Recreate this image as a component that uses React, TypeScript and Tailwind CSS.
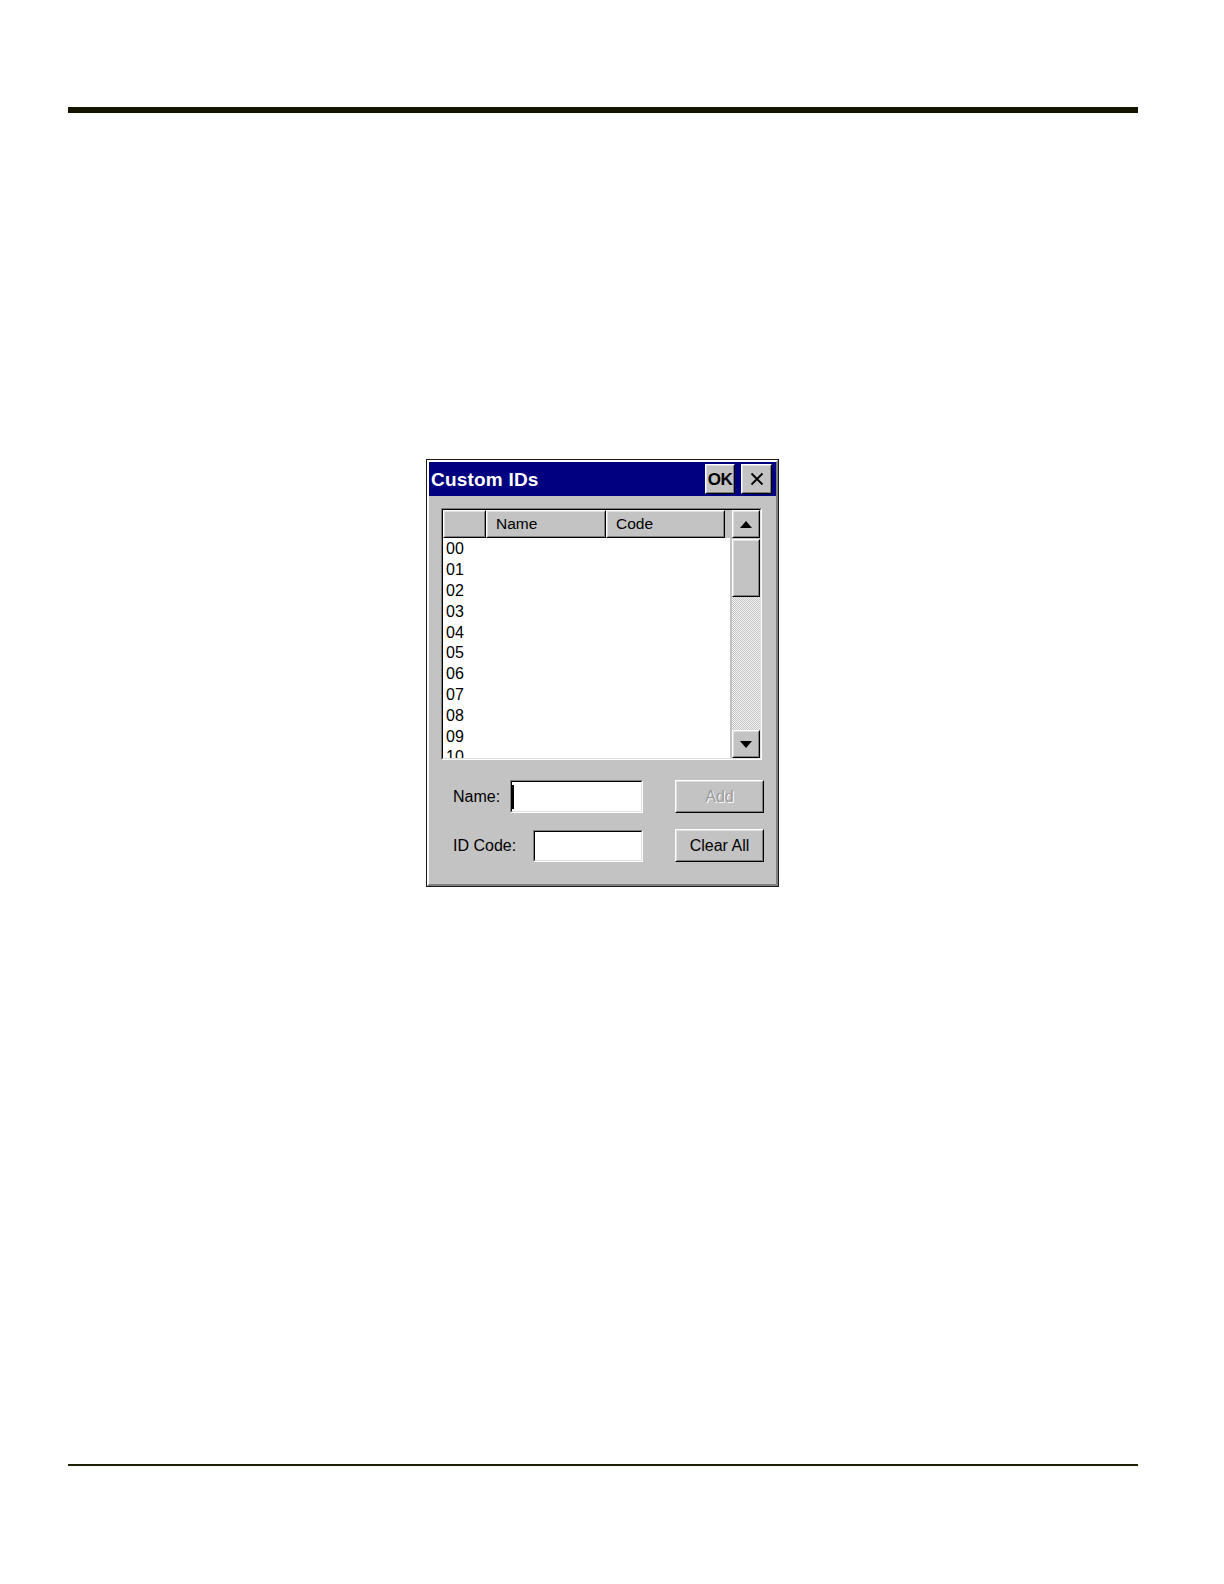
import React from "react";

const font = { fontFamily: '"Liberation Sans", Arial, sans-serif' };

function Raised({ className = "", children }: { className?: string; children?: React.ReactNode }) {
  return (
    <div className={`border border-t-white border-l-white border-b-black border-r-black ${className}`}>
      <div className="w-full h-full border border-t-[#dfdfdf] border-l-[#dfdfdf] border-b-[#808080] border-r-[#808080] bg-[#c3c3c3] flex items-center justify-center">
        {children}
      </div>
    </div>
  );
}

function Sunken({ className = "", children, inner = "" }: { className?: string; children?: React.ReactNode; inner?: string }) {
  return (
    <div className={`border border-t-[#808080] border-l-[#808080] border-b-white border-r-white ${className}`}>
      <div className={`w-full h-full border border-t-black border-l-black border-b-[#dfdfdf] border-r-[#dfdfdf] bg-white ${inner}`}>
        {children}
      </div>
    </div>
  );
}

function Arrow({ up }: { up?: boolean }) {
  return (
    <svg width="12" height="7" viewBox="0 0 12 7">
      {up ? <polygon points="0,7 12,7 6,0" fill="#000" /> : <polygon points="0,0 12,0 6,7" fill="#000" />}
    </svg>
  );
}

export default function App() {
  const rows = ["00", "01", "02", "03", "04", "05", "06", "07", "08", "09", "10"];
  return (
    <div className="w-full bg-white pb-[60px]" style={font}>
      <div className="pt-[107px] pl-[68px]">
        <div className="w-[1070px] h-[6px] bg-[#141400]" />
        {/* Dialog */}
        <div className="mt-[346px] ml-[358px] w-[353px] h-[428px] border border-[#1a1a1a]">
          <div className="w-full h-full border-2 border-t-white border-l-white border-b-[#808080] border-r-[#808080] bg-[#c3c3c3] flex flex-col">
            {/* Title bar */}
            <div className="h-[34px] bg-[#000080] flex items-center pl-[2px] pr-[4px] shrink-0">
              <span className="text-white font-bold text-[19px] leading-none tracking-[0.2px] flex-1">Custom IDs</span>
              <Raised className="w-[30px] h-[30px]">
                <span className="font-bold text-[17px] leading-none text-black tracking-[-0.5px]">OK</span>
              </Raised>
              <Raised className="w-[31px] h-[30px] ml-[6px]">
                <svg width="14" height="14" viewBox="0 0 14 14">
                  <path d="M1.5 1.5 L12.5 12.5 M12.5 1.5 L1.5 12.5" stroke="#000" strokeWidth="1.8" />
                </svg>
              </Raised>
            </div>
            {/* Body */}
            <div className="flex-1 px-[12px] pt-[12px]">
              {/* List view */}
              <Sunken className="w-[321px] h-[252px]" inner="flex overflow-hidden">
                <div className="flex-1 flex flex-col overflow-hidden">
                  <div className="h-[28px] flex shrink-0 bg-[#c3c3c3]">
                    <Raised className="w-[43px] h-[28px]" />
                    <Raised className="w-[120px] h-[28px]">
                      <span className="w-full pl-[8px] text-[15.5px] text-black leading-none">Name</span>
                    </Raised>
                    <Raised className="w-[119px] h-[28px]">
                      <span className="w-full pl-[8px] text-[15.5px] text-black leading-none">Code</span>
                    </Raised>
                  </div>
                  <div className="flex-1 overflow-hidden pt-[1px]">
                    {rows.map((r) => (
                      <div key={r} className="h-[20.8px] flex items-center pl-[3px] text-[16px] text-black leading-none">
                        {r}
                      </div>
                    ))}
                  </div>
                </div>
                {/* Scrollbar */}
                <div className="w-[30px] flex flex-col bg-[#c3c3c3] border-l border-[#c3c3c3] pl-px">
                  <Raised className="w-[28px] h-[28px] shrink-0">
                    <Arrow up />
                  </Raised>
                  <Raised className="w-[28px] h-[58px] mt-[1px] shrink-0" />
                  <div className="flex-1 bg-[repeating-conic-gradient(#c3c3c3_0%_25%,#f4f4f4_0%_50%)] bg-[length:2px_2px]" />
                  <Raised className="w-[28px] h-[28px] shrink-0">
                    <Arrow />
                  </Raised>
                </div>
              </Sunken>
              {/* Form */}
              <div className="mt-[20px] flex items-center h-[33px]">
                <span className="ml-[12px] w-[57px] text-[16px] text-black">Name:</span>
                <Sunken className="w-[133px] h-[33px]" inner="flex items-center">
                  <div className="w-[2px] h-[24px] bg-black" />
                </Sunken>
                <Raised className="ml-[32px] w-[89px] h-[33px]">
                  <span className="text-[16px] text-[#9a9a9a] [text-shadow:1px_1px_0_#ffffff]">Add</span>
                </Raised>
              </div>
              <div className="mt-[16px] flex items-center h-[33px]">
                <span className="ml-[12px] w-[80px] text-[16px] text-black">ID Code:</span>
                <Sunken className="w-[110px] h-[32px]" />
                <Raised className="ml-[32px] w-[89px] h-[33px]">
                  <span className="text-[16px] text-black">Clear All</span>
                </Raised>
              </div>
            </div>
          </div>
        </div>
        <div className="mt-[577px] w-[1070px] h-[2px] bg-[#1e1e00]" />
      </div>
    </div>
  );
}
